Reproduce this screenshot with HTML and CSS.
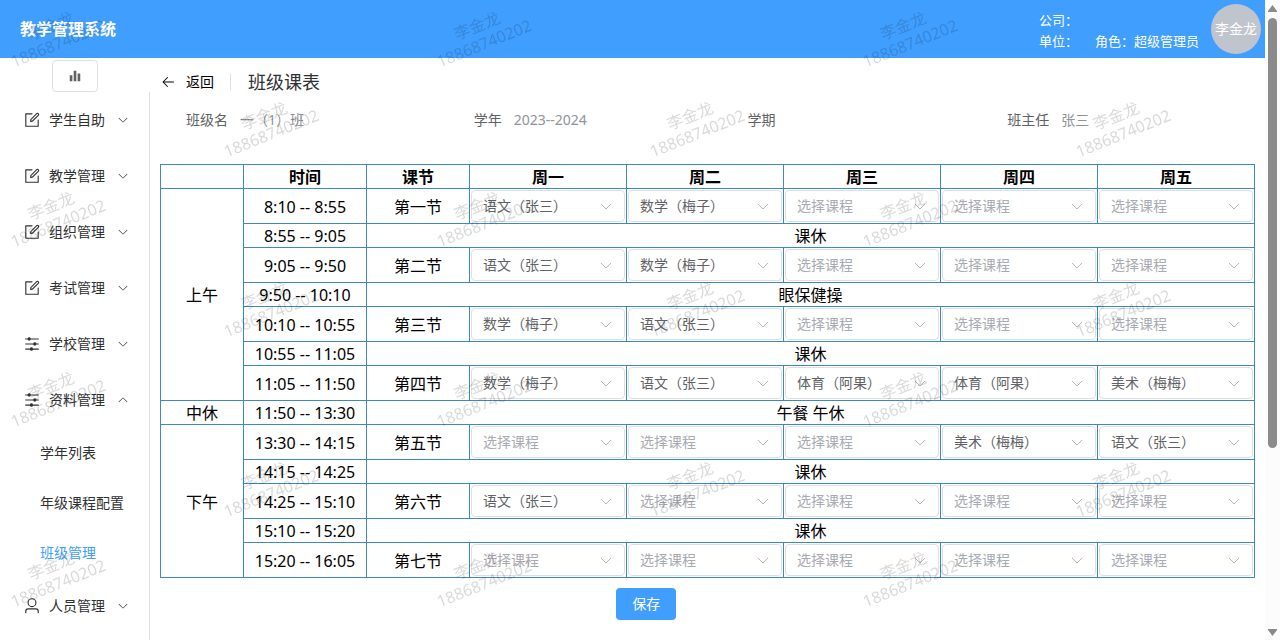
FILE: index.html
```html
<!DOCTYPE html>
<html lang="zh-CN">
<head>
<meta charset="utf-8">
<meta name="viewport" content="width=device-width, initial-scale=1">
<title>教学管理系统</title>
<link rel="stylesheet" href="styles.css">
</head>
<body>
<svg class="symbols" aria-hidden="true">
  <symbol id="i-edit" viewBox="0 0 1024 1024"><path d="M832 512a32 32 0 1 1 64 0v352a32 32 0 0 1-32 32H160a32 32 0 0 1-32-32V160a32 32 0 0 1 32-32h352a32 32 0 0 1 0 64H192v640h640V512z"/><path d="m469.952 554.24 52.8-7.552L847.104 222.4a32 32 0 1 0-45.248-45.248L477.44 501.44l-7.552 52.8zm422.4-422.4a96 96 0 0 1 0 135.808l-331.84 331.84a32 32 0 0 1-18.112 9.088L436.8 623.68a32 32 0 0 1-36.224-36.224l15.104-105.6a32 32 0 0 1 9.024-18.112l331.904-331.84a96 96 0 0 1 135.744 0z"/></symbol>
  <symbol id="i-operation" viewBox="0 0 1024 1024"><path d="M389.44 768a96.064 96.064 0 0 1 181.12 0H896v64H570.56a96.064 96.064 0 0 1-181.12 0H128v-64h261.44zm192-288a96.064 96.064 0 0 1 181.12 0H896v64H762.56a96.064 96.064 0 0 1-181.12 0H128v-64h453.44zm-320-288a96.064 96.064 0 0 1 181.12 0H896v64H442.56a96.064 96.064 0 0 1-181.12 0H128v-64h133.44z"/></symbol>
  <symbol id="i-user" viewBox="0 0 1024 1024"><path d="M512 512a192 192 0 1 0 0-384 192 192 0 0 0 0 384zm0 64a256 256 0 1 1 0-512 256 256 0 0 1 0 512zm320 320v-96a96 96 0 0 0-96-96H288a96 96 0 0 0-96 96v96a32 32 0 1 1-64 0v-96a160 160 0 0 1 160-160h448a160 160 0 0 1 160 160v96a32 32 0 1 1-64 0z"/></symbol>
  <symbol id="i-down" viewBox="0 0 1024 1024"><path d="M831.872 340.864 512 652.672 192.128 340.864a30.592 30.592 0 0 0-42.752 0 29.12 29.12 0 0 0 0 41.6L489.664 714.24a32 32 0 0 0 44.672 0l340.288-331.712a29.12 29.12 0 0 0 0-41.728 30.592 30.592 0 0 0-42.752 0z"/></symbol>
  <symbol id="i-back" viewBox="0 0 1024 1024"><path d="M224 480h640a32 32 0 1 1 0 64H224a32 32 0 0 1 0-64z"/><path d="m237.248 512 265.408 265.344a32 32 0 0 1-45.312 45.312l-288-288a32 32 0 0 1 0-45.312l288-288a32 32 0 1 1 45.312 45.312L237.248 512z"/></symbol>
  <symbol id="i-bars" viewBox="0 0 1024 1024"><path d="M416 896V128h192v768H416zm-288 0V448h192v448H128zm576 0V320h192v576H704z"/></symbol>
</svg>

<div class="page">
  <header class="topbar">
    <h1 class="brand">教学管理系统</h1>
    <div class="account">
      <div class="account-line"><span>公司：</span></div>
      <div class="account-line"><span>单位：</span><span>角色：超级管理员</span></div>
    </div>
    <div class="avatar">李金龙</div>
  </header>

  <div class="body">
    <aside class="sidebar">
      <div class="toggle-row"><button class="toggle" type="button" aria-label="折叠菜单"><svg class="toggle-icon"><use href="#i-bars"/></svg></button></div>
      <nav class="menu">
        <button class="menu-item" type="button"><svg class="menu-icon"><use href="#i-edit"/></svg><span class="label">学生自助</span><svg class="menu-arrow"><use href="#i-down"/></svg></button>
        <button class="menu-item" type="button"><svg class="menu-icon"><use href="#i-edit"/></svg><span class="label">教学管理</span><svg class="menu-arrow"><use href="#i-down"/></svg></button>
        <button class="menu-item" type="button"><svg class="menu-icon"><use href="#i-edit"/></svg><span class="label">组织管理</span><svg class="menu-arrow"><use href="#i-down"/></svg></button>
        <button class="menu-item" type="button"><svg class="menu-icon"><use href="#i-edit"/></svg><span class="label">考试管理</span><svg class="menu-arrow"><use href="#i-down"/></svg></button>
        <button class="menu-item" type="button"><svg class="menu-icon"><use href="#i-operation"/></svg><span class="label">学校管理</span><svg class="menu-arrow"><use href="#i-down"/></svg></button>
        <button class="menu-item" type="button" aria-expanded="true"><svg class="menu-icon"><use href="#i-operation"/></svg><span class="label">资料管理</span><svg class="menu-arrow open"><use href="#i-down"/></svg></button>
        <a class="submenu-item" href="#years">学年列表</a>
        <a class="submenu-item" href="#courses">年级课程配置</a>
        <a class="submenu-item active" href="#classes">班级管理</a>
        <button class="menu-item" type="button"><svg class="menu-icon"><use href="#i-user"/></svg><span class="label">人员管理</span><svg class="menu-arrow"><use href="#i-down"/></svg></button>
      </nav>
    </aside>

    <main class="content">
      <div class="page-header">
        <button class="back" type="button"><svg class="back-icon"><use href="#i-back"/></svg><span class="label">返回</span></button>
        <span class="divider"></span>
        <h2 class="title">班级课表</h2>
      </div>

      <dl class="info">
        <div class="info-item"><dt>班级名</dt><dd>一（1）班</dd></div>
        <div class="info-item"><dt>学年</dt><dd>2023--2024</dd></div>
        <div class="info-item"><dt>学期</dt><dd></dd></div>
        <div class="info-item"><dt>班主任</dt><dd>张三</dd></div>
      </dl>

      <table class="schedule">
        <colgroup><col class="col-part"><col class="col-time"><col class="col-lesson"><col span="5"></colgroup>
        <thead>
          <tr><th></th><th>时间</th><th>课节</th><th>周一</th><th>周二</th><th>周三</th><th>周四</th><th>周五</th></tr>
        </thead>
        <tbody>
          <tr>
            <td rowspan="7">上午</td><td>8:10 -- 8:55</td><td>第一节</td>
            <td><select class="course" aria-label="周一第一节"><option>语文（张三）</option></select></td>
            <td><select class="course" aria-label="周二第一节"><option>数学（梅子）</option></select></td>
            <td><select class="course empty" aria-label="周三第一节"><option>选择课程</option></select></td>
            <td><select class="course empty" aria-label="周四第一节"><option>选择课程</option></select></td>
            <td><select class="course empty" aria-label="周五第一节"><option>选择课程</option></select></td>
          </tr>
          <tr><td>8:55 -- 9:05</td><td colspan="6">课休</td></tr>
          <tr>
            <td>9:05 -- 9:50</td><td>第二节</td>
            <td><select class="course" aria-label="周一第二节"><option>语文（张三）</option></select></td>
            <td><select class="course" aria-label="周二第二节"><option>数学（梅子）</option></select></td>
            <td><select class="course empty" aria-label="周三第二节"><option>选择课程</option></select></td>
            <td><select class="course empty" aria-label="周四第二节"><option>选择课程</option></select></td>
            <td><select class="course empty" aria-label="周五第二节"><option>选择课程</option></select></td>
          </tr>
          <tr><td>9:50 -- 10:10</td><td colspan="6">眼保健操</td></tr>
          <tr>
            <td>10:10 -- 10:55</td><td>第三节</td>
            <td><select class="course" aria-label="周一第三节"><option>数学（梅子）</option></select></td>
            <td><select class="course" aria-label="周二第三节"><option>语文（张三）</option></select></td>
            <td><select class="course empty" aria-label="周三第三节"><option>选择课程</option></select></td>
            <td><select class="course empty" aria-label="周四第三节"><option>选择课程</option></select></td>
            <td><select class="course empty" aria-label="周五第三节"><option>选择课程</option></select></td>
          </tr>
          <tr><td>10:55 -- 11:05</td><td colspan="6">课休</td></tr>
          <tr>
            <td>11:05 -- 11:50</td><td>第四节</td>
            <td><select class="course" aria-label="周一第四节"><option>数学（梅子）</option></select></td>
            <td><select class="course" aria-label="周二第四节"><option>语文（张三）</option></select></td>
            <td><select class="course" aria-label="周三第四节"><option>体育（阿果）</option></select></td>
            <td><select class="course" aria-label="周四第四节"><option>体育（阿果）</option></select></td>
            <td><select class="course" aria-label="周五第四节"><option>美术（梅梅）</option></select></td>
          </tr>
          <tr><td>中休</td><td>11:50 -- 13:30</td><td colspan="6">午餐 午休</td></tr>
          <tr>
            <td rowspan="5">下午</td><td>13:30 -- 14:15</td><td>第五节</td>
            <td><select class="course empty" aria-label="周一第五节"><option>选择课程</option></select></td>
            <td><select class="course empty" aria-label="周二第五节"><option>选择课程</option></select></td>
            <td><select class="course empty" aria-label="周三第五节"><option>选择课程</option></select></td>
            <td><select class="course" aria-label="周四第五节"><option>美术（梅梅）</option></select></td>
            <td><select class="course" aria-label="周五第五节"><option>语文（张三）</option></select></td>
          </tr>
          <tr><td>14:15 -- 14:25</td><td colspan="6">课休</td></tr>
          <tr>
            <td>14:25 -- 15:10</td><td>第六节</td>
            <td><select class="course" aria-label="周一第六节"><option>语文（张三）</option></select></td>
            <td><select class="course empty" aria-label="周二第六节"><option>选择课程</option></select></td>
            <td><select class="course empty" aria-label="周三第六节"><option>选择课程</option></select></td>
            <td><select class="course empty" aria-label="周四第六节"><option>选择课程</option></select></td>
            <td><select class="course empty" aria-label="周五第六节"><option>选择课程</option></select></td>
          </tr>
          <tr><td>15:10 -- 15:20</td><td colspan="6">课休</td></tr>
          <tr>
            <td>15:20 -- 16:05</td><td>第七节</td>
            <td><select class="course empty" aria-label="周一第七节"><option>选择课程</option></select></td>
            <td><select class="course empty" aria-label="周二第七节"><option>选择课程</option></select></td>
            <td><select class="course empty" aria-label="周三第七节"><option>选择课程</option></select></td>
            <td><select class="course empty" aria-label="周四第七节"><option>选择课程</option></select></td>
            <td><select class="course empty" aria-label="周五第七节"><option>选择课程</option></select></td>
          </tr>
        </tbody>
      </table>

      <button class="save" type="button">保存</button>
    </main>
  </div>

  <svg class="watermark" aria-hidden="true">
    <defs>
      <pattern id="mark" width="426" height="180" patternUnits="userSpaceOnUse">
        <g class="mark-text">
          <g transform="translate(54 33) rotate(-22)"><text x="0" y="-2">李金龙</text><text x="0" y="17">18868740202</text></g>
          <g transform="translate(267 123) rotate(-22)"><text x="0" y="-2">李金龙</text><text x="0" y="17">18868740202</text></g>
        </g>
      </pattern>
    </defs>
    <rect width="100%" height="100%" fill="url(#mark)"/>
  </svg>
</div>

<div class="scrollbar" aria-hidden="true">
  <svg class="scroll-arrow" viewBox="0 0 9 7"><path d="M4.5 0 9 6v1H0V6z"/></svg>
  <div class="scroll-track"><div class="scroll-thumb"></div></div>
  <svg class="scroll-arrow" viewBox="0 0 9 7"><path d="M4.5 7 9 1V0H0v1z"/></svg>
</div>
</body>
</html>
```
FILE: styles.css
```css
* {
  box-sizing: border-box;
}

body {
  display: flex;
  height: 100vh;
  margin: 0;
  overflow: hidden;
  background: #fff;
  color: #000;
  font-family: "Noto Sans", "Noto Sans CJK SC", sans-serif;
  font-size: 14px;
}

button,
select {
  font: inherit;
}

svg {
  fill: currentColor;
}

.symbols {
  position: absolute;
  width: 0;
  height: 0;
}

.page {
  position: relative;
  display: flex;
  flex: 1;
  flex-direction: column;
  min-width: 0;
  overflow: hidden;
}

.label {
  padding-bottom: 2px;
}

/* Top bar */
.topbar {
  display: flex;
  flex: none;
  align-items: center;
  height: 58px;
  padding: 0 4px 0 20px;
  background: #409eff;
  color: #fff;
}

.brand {
  flex: 1;
  margin: 0;
  font-size: 16px;
  font-weight: 700;
  line-height: 24px;
}

.account {
  margin-right: 12px;
  padding-top: 3px;
  font-size: 13px;
  line-height: 21px;
}

.account-line {
  display: flex;
  gap: 17px;
}

.avatar {
  width: 50px;
  height: 50px;
  border-radius: 50%;
  background: #c0c4cc;
  line-height: 50px;
  text-align: center;
  white-space: nowrap;
}

/* Sidebar */
.body {
  display: flex;
  flex: 1;
  min-height: 0;
}

.sidebar {
  display: flex;
  flex: none;
  flex-direction: column;
  width: 150px;
}

.toggle-row {
  display: flex;
  justify-content: center;
  padding-top: 2px;
}

.toggle {
  display: flex;
  align-items: center;
  justify-content: center;
  width: 46px;
  height: 32px;
  padding: 0;
  border: 1px solid #dcdfe6;
  border-radius: 4px;
  background: #fff;
  color: #606266;
}

.toggle-icon {
  width: 14px;
  height: 14px;
}

.menu {
  flex: 1;
  min-height: 0;
  overflow: hidden;
  border-right: 1px solid #dcdfe6;
}

.menu-item {
  display: flex;
  align-items: center;
  width: 100%;
  height: 56px;
  padding: 0 20px 0 23px;
  border: 0;
  background: none;
  color: #303133;
  text-align: left;
}

.menu-icon {
  width: 18px;
  height: 18px;
  margin-right: 8px;
}

.menu-arrow {
  width: 12px;
  height: 12px;
  margin-left: auto;
}

.menu-arrow.open {
  transform: rotate(180deg);
}

.submenu-item {
  display: block;
  padding-left: 40px;
  color: #303133;
  line-height: 50px;
  text-decoration: none;
  white-space: nowrap;
}

.submenu-item.active {
  color: #409eff;
}

/* Content */
.content {
  flex: 1;
  min-width: 0;
  padding: 12px 10px 0;
}

.page-header {
  display: flex;
  align-items: center;
  height: 24px;
}

.back {
  display: flex;
  gap: 10px;
  align-items: center;
  padding: 0;
  border: 0;
  background: none;
  color: #000;
}

.back-icon {
  width: 16px;
  height: 16px;
}

.divider {
  width: 1px;
  height: 16px;
  margin: 0 17px 0 16px;
  background: #dcdfe6;
}

.title {
  margin: 0;
  color: #303133;
  font-size: 18px;
  font-weight: 400;
  line-height: 24px;
}

.info {
  display: grid;
  grid-template-columns: repeat(4, 1fr);
  margin: 10px 0 28px;
  line-height: 32px;
}

.info-item {
  display: flex;
}

.info dt {
  width: 80px;
  padding-right: 12px;
  color: #606266;
  text-align: right;
}

.info dd {
  margin: 0;
  color: #909399;
}

/* Timetable */
.schedule {
  width: 100%;
  border-collapse: collapse;
  table-layout: fixed;
  font-size: 16px;
  line-height: 21px;
  text-align: center;
}

.schedule th,
.schedule td {
  padding: 2px 1px 0;
  border: 1px solid #3c88c8;
}

.schedule td:has(.course) {
  padding: 1px;
}

.col-part {
  width: 83px;
}

.col-time {
  width: 123px;
}

.col-lesson {
  width: 103px;
}

.course {
  display: block;
  width: 100%;
  height: 32px;
  padding: 0 30px 2px 11px;
  border: 1px solid #dcdfe6;
  border-radius: 4px;
  appearance: none;
  background: #fff url("data:image/svg+xml,%3Csvg xmlns='http://www.w3.org/2000/svg' viewBox='0 0 14 14'%3E%3Cpath d='M2 5l5 5 5-5' fill='none' stroke='%23b4b7bd'/%3E%3C/svg%3E") no-repeat right 11px center / 14px 14px;
  color: #606266;
  font-size: 14px;
}

.course.empty {
  color: #a8abb2;
}

.save {
  display: block;
  width: 60px;
  height: 32px;
  margin: 10px 0 0 41.6667%;
  padding: 0 0 2px;
  border: 0;
  border-radius: 4px;
  background: #409eff;
  color: #fff;
}

/* Watermark laid over the whole page */
.watermark {
  position: absolute;
  inset: 0;
  width: 100%;
  height: 100%;
  pointer-events: none;
}

.mark-text {
  fill: rgba(0, 0, 0, 0.15);
  font-size: 16px;
  text-anchor: middle;
}

/* Scrollbar */
.scrollbar {
  display: flex;
  flex: none;
  flex-direction: column;
  gap: 6px;
  align-items: center;
  width: 15px;
  padding: 5px 0 4px;
  background: #fcfcfc;
  color: #8b8b8b;
}

.scroll-arrow {
  width: 9px;
  height: 7px;
}

.scroll-track {
  flex: 1;
  width: 9px;
}

.scroll-thumb {
  height: 71%;
  border-radius: 5px;
  background: #8b8b8b;
}
```
